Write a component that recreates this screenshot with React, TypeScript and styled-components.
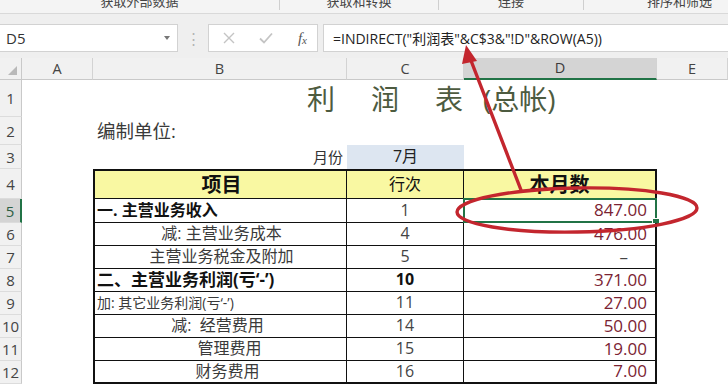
import React from 'react';
import styled, { createGlobalStyle } from 'styled-components';

interface LineItem {
  row: number;
  item: string;
  align: 'left' | 'center';
  bold?: boolean;
  size?: number;
  indent?: number;
  lineNo: string;
  lineBold?: boolean;
  amount: string;
  dash?: boolean;
}

const ribbonGroups = [
  { label: '获取外部数据', width: 280 },
  { label: '获取和转换', width: 159 },
  { label: '连接', width: 145 },
  { label: '排序和筛选', width: 192 },
];

const columns = ['A', 'B', 'C', 'D', 'E'];

const lineItems: LineItem[] = [
  { row: 5, item: '一. 主营业务收入', align: 'left', bold: true, lineNo: '1', amount: '847.00' },
  { row: 6, item: '减: 主营业务成本', align: 'center', lineNo: '4', amount: '476.00' },
  { row: 7, item: '主营业务税金及附加', align: 'center', lineNo: '5', amount: '–', dash: true },
  { row: 8, item: '二、主营业务利润(亏‘-’)', align: 'left', bold: true, size: 17, lineNo: '10', lineBold: true, amount: '371.00' },
  { row: 9, item: '加: 其它业务利润(亏‘-’)', align: 'left', size: 14, lineNo: '11', amount: '27.00' },
  { row: 10, item: '减:  经营费用', align: 'center', indent: -8, lineNo: '14', amount: '50.00' },
  { row: 11, item: '管理费用', align: 'center', indent: 16, lineNo: '15', amount: '19.00' },
  { row: 12, item: '财务费用', align: 'center', indent: 12, lineNo: '16', amount: '7.00' },
];

const App: React.FC = () => {
  return (
    <Page>
      <GlobalStyle />
      <Ribbon>
        {ribbonGroups.map(({ label, width }) => (
          <RibbonGroup key={label} $width={width}>
            <RibbonLabel>{label}</RibbonLabel>
          </RibbonGroup>
        ))}
      </Ribbon>

      <FormulaBar>
        <NameBox>
          D5
          <DropArrow />
        </NameBox>
        <Grip>⋮</Grip>
        <FuncButtons>
          <svg width="12" height="12" viewBox="0 0 12 12">
            <path d="M1 1 L11 11 M11 1 L1 11" stroke="#c4c4c4" strokeWidth="1.4" fill="none" />
          </svg>
          <svg width="14" height="12" viewBox="0 0 14 12">
            <path d="M1 6.5 L5 10.5 L13 1.5" stroke="#c4c4c4" strokeWidth="1.8" fill="none" />
          </svg>
          <Fx>
            f<sub>x</sub>
          </Fx>
        </FuncButtons>
        <FormulaInput>{'=INDIRECT("利润表"&C$3&"!D"&ROW(A5))'}</FormulaInput>
      </FormulaBar>

      <Sheet>
        <SheetRow $height={22}>
          <Corner>
            <CornerMark />
          </Corner>
          {columns.map((c) => (
            <ColHead key={c} $active={c === 'D'}>
              {c}
            </ColHead>
          ))}
        </SheetRow>

        <SheetRow $height={37}>
          <RowHead>1</RowHead>
          <span />
          <TitleCell>
            <span>利</span>
            <span>润</span>
            <span>表</span>
            <TitleNote>(总帐)</TitleNote>
          </TitleCell>
        </SheetRow>

        <SheetRow $height={28}>
          <RowHead>2</RowHead>
          <span />
          <UnitCell>编制单位:</UnitCell>
        </SheetRow>

        <SheetRow $height={24}>
          <RowHead>3</RowHead>
          <span />
          <MonthLabel>月份</MonthLabel>
          <MonthValue>7月</MonthValue>
        </SheetRow>

        <SheetRow $height={30}>
          <RowHead>4</RowHead>
          <span />
          <ItemCell $head $align="center" $bold $size={20}>
            项目
          </ItemCell>
          <LineNoCell $head>行次</LineNoCell>
          <AmountCell $head>本月数</AmountCell>
        </SheetRow>

        {lineItems.map((it, i) => {
          const last = i === lineItems.length - 1;
          const selected = it.row === 5;
          return (
            <SheetRow key={it.row} $height={it.row === 5 ? 24 : 23}>
              <RowHead $active={selected}>{it.row}</RowHead>
              <span />
              <ItemCell
                $last={last}
                $align={it.align}
                $bold={it.bold}
                $size={it.size ?? 16}
                $indent={it.indent ?? 0}
              >
                {it.item}
              </ItemCell>
              <LineNoCell $last={last} $bold={it.lineBold}>
                {it.lineNo}
              </LineNoCell>
              <AmountCell $last={last} $dash={it.dash}>
                {it.amount}
                {selected && (
                  <Selection>
                    <FillHandle />
                  </Selection>
                )}
              </AmountCell>
            </SheetRow>
          );
        })}
      </Sheet>

      <Annotation width="728" height="384" viewBox="0 0 728 384">
        <line x1="521" y1="190" x2="470" y2="58" stroke="#c3262e" strokeWidth="3.4" strokeLinecap="round" />
        <polygon points="466,45 477,61 462,64" fill="#c3262e" />
        <ellipse
          cx="577"
          cy="210"
          rx="120"
          ry="22"
          fill="none"
          stroke="#c3262e"
          strokeWidth="3.4"
          transform="rotate(-1 577 210)"
        />
      </Annotation>
    </Page>
  );
};

export default App;

// Styled Components
const GlobalStyle = createGlobalStyle`
  html, body {
    margin: 0;
    padding: 0;
    background: #fff;
  }
  body {
    font-family: "Open Sans", "Noto Sans CJK SC", sans-serif;
    color: #333;
  }
`;

const COLS = '22px 71px 254px 117px 193px 71px';

const Page = styled.div`
  position: relative;
  width: 728px;
  height: 384px;
  overflow: hidden;
  display: flex;
  flex-direction: column;
  background: #fff;
`;

const Ribbon = styled.div`
  display: flex;
  height: 13px;
  background: #f4f4f4;
  border-bottom: 1px solid #d9d9d9;
  overflow: hidden;
  flex-shrink: 0;
`;

const RibbonGroup = styled.div<{ $width: number }>`
  flex: 0 0 ${({ $width }) => $width}px;
  display: flex;
  justify-content: center;
  box-sizing: border-box;
  border-right: 1px solid #cfcfcf;
  height: 10px;
`;

const RibbonLabel = styled.div`
  font-size: 13px;
  line-height: 13px;
  margin-top: -5px;
  color: #444;
  white-space: nowrap;
`;

const FormulaBar = styled.div`
  display: flex;
  align-items: stretch;
  height: 28px;
  padding: 10px 0 6px;
  background: #efefef;
  flex-shrink: 0;
`;

const NameBox = styled.div`
  width: 179px;
  margin-left: -1px;
  box-sizing: border-box;
  background: #fff;
  border: 1px solid #d2d2d2;
  display: flex;
  align-items: center;
  justify-content: space-between;
  padding: 0 7px 0 6px;
  font-size: 15px;
  color: #333;
`;

const DropArrow = styled.span`
  width: 0;
  height: 0;
  border-left: 3.5px solid transparent;
  border-right: 3.5px solid transparent;
  border-top: 4px solid #777;
`;

const Grip = styled.div`
  width: 30px;
  display: flex;
  align-items: center;
  justify-content: center;
  color: #b4b4b4;
  font-size: 15px;
`;

const FuncButtons = styled.div`
  width: 110px;
  box-sizing: border-box;
  background: #fff;
  border: 1px solid #d2d2d2;
  display: flex;
  align-items: center;
  justify-content: space-between;
  padding: 0 10px 0 14px;
`;

const Fx = styled.span`
  font-family: "Liberation Serif", serif;
  font-style: italic;
  font-size: 15px;
  color: #555;
  sub {
    font-size: 11px;
    vertical-align: -1px;
  }
`;

const FormulaInput = styled.div`
  flex: 1;
  margin-left: 5px;
  background: #fff;
  border: 1px solid #d2d2d2;
  border-right: none;
  display: flex;
  align-items: center;
  padding-left: 9px;
  font-size: 14px;
  color: #222;
  white-space: nowrap;
`;

const Sheet = styled.div`
  display: flex;
  flex-direction: column;
`;

const SheetRow = styled.div<{ $height: number }>`
  display: grid;
  grid-template-columns: ${COLS};
  grid-template-rows: minmax(0, 1fr);
  height: ${({ $height }) => $height}px;
  flex-shrink: 0;
  line-height: 1.2;
`;

const Corner = styled.div`
  background: #f1f1f1;
  border-right: 1px solid #c9c9c9;
  border-bottom: 1px solid #c9c9c9;
  display: flex;
  align-items: flex-end;
  justify-content: flex-end;
  padding: 0 4px 4px 0;
`;

const CornerMark = styled.span`
  width: 0;
  height: 0;
  border-left: 9px solid transparent;
  border-bottom: 9px solid #b9b9b9;
`;

const ColHead = styled.div<{ $active?: boolean }>`
  box-sizing: border-box;
  background: ${({ $active }) => ($active ? '#d4d4d4' : '#f1f1f1')};
  border-right: 1px solid #d3d3d3;
  border-bottom: ${({ $active }) => ($active ? '2px solid #217346' : '1px solid #c9c9c9')};
  display: flex;
  align-items: center;
  justify-content: center;
  font-size: 14.5px;
  color: ${({ $active }) => ($active ? '#3b3b3b' : '#444')};
`;

const RowHead = styled.div<{ $active?: boolean }>`
  box-sizing: border-box;
  background: ${({ $active }) => ($active ? '#d4d4d4' : '#f1f1f1')};
  border-right: ${({ $active }) => ($active ? '2px solid #217346' : '1px solid #c9c9c9')};
  border-bottom: 1px solid #dcdcdc;
  display: flex;
  align-items: center;
  justify-content: center;
  font-size: 15px;
  color: ${({ $active }) => ($active ? '#2c5e42' : '#444')};
`;

const TitleCell = styled.div`
  grid-column: 3 / 7;
  display: flex;
  align-items: center;
  gap: 36px;
  padding: 3px 0 0 214px;
  font-size: 28px;
  color: #4d5b40;
  white-space: nowrap;
`;

const TitleNote = styled.span`
  margin-left: -16px;
`;

const UnitCell = styled.div`
  grid-column: 3 / 7;
  display: flex;
  align-items: center;
  padding-left: 4px;
  font-size: 18.5px;
  color: #3a3a3a;
`;

const MonthLabel = styled.div`
  display: flex;
  align-items: center;
  justify-content: flex-end;
  padding-right: 4px;
  font-size: 15px;
  color: #333;
`;

const MonthValue = styled.div`
  display: flex;
  align-items: center;
  justify-content: center;
  background: #dde6f1;
  font-size: 16px;
  color: #222;
`;

const TableCell = styled.div<{ $head?: boolean; $last?: boolean; $bold?: boolean }>`
  position: relative;
  box-sizing: border-box;
  min-height: 0;
  display: flex;
  align-items: center;
  white-space: pre;
  background: ${({ $head }) => ($head ? '#f9f8a2' : '#fff')};
  border-top: ${({ $head }) => ($head ? '2px solid #111' : 'none')};
  border-bottom: ${({ $last }) => ($last ? '2px' : '1px')} solid #111;
  font-weight: ${({ $bold }) => ($bold ? 700 : 400)};
  color: #2a2a2a;
`;

const ItemCell = styled(TableCell)<{ $align: 'left' | 'center'; $size?: number; $indent?: number }>`
  border-left: 2px solid #111;
  border-right: 1px solid #111;
  justify-content: ${({ $align }) => ($align === 'left' ? 'flex-start' : 'center')};
  padding-left: ${({ $align, $indent = 0 }) => ($align === 'left' ? 2 : 2 + Math.max($indent, 0))}px;
  padding-right: ${({ $indent = 0 }) => Math.max(-$indent, 0)}px;
  font-size: ${({ $size = 16 }) => $size}px;
  color: ${({ $bold }) => ($bold ? '#111' : '#3a3a3a')};
`;

const LineNoCell = styled(TableCell)`
  border-right: 1px solid #111;
  justify-content: center;
  font-size: 16px;
  color: ${({ $bold, $head }) => ($bold || $head ? '#111' : '#444')};
`;

const AmountCell = styled(TableCell)<{ $dash?: boolean }>`
  border-right: 2px solid #111;
  justify-content: ${({ $head }) => ($head ? 'center' : 'flex-end')};
  padding-right: ${({ $head, $dash }) => ($head ? 0 : $dash ? 27 : 8)}px;
  font-size: ${({ $head }) => ($head ? 20 : 17)}px;
  font-weight: ${({ $head }) => ($head ? 700 : 400)};
  color: ${({ $head, $dash }) => ($head ? '#111' : $dash ? '#444' : '#7b2333')};
`;

const Selection = styled.div`
  position: absolute;
  top: -1px;
  left: -1px;
  right: -2px;
  bottom: -1px;
  border: 2px solid #217346;
  pointer-events: none;
`;

const FillHandle = styled.div`
  position: absolute;
  right: -5px;
  bottom: -5px;
  width: 6px;
  height: 6px;
  background: #217346;
  border: 1px solid #fff;
`;

const Annotation = styled.svg`
  position: absolute;
  top: 0;
  left: 0;
  pointer-events: none;
`;
